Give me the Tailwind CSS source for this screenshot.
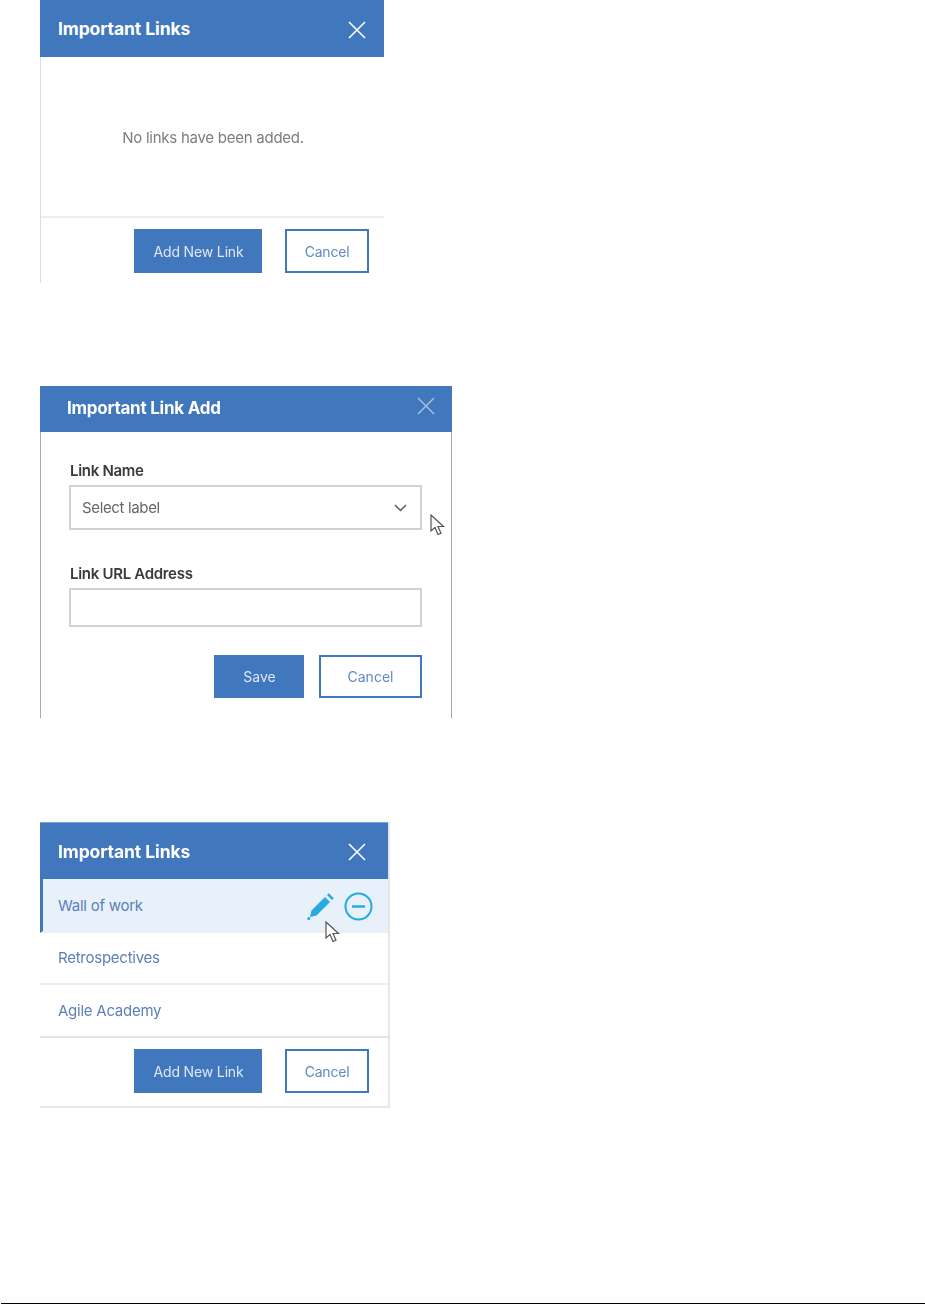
<!DOCTYPE html>
<html lang="en">
<head>
    <meta charset="UTF-8">
    <meta name="viewport" content="width=device-width, initial-scale=1.0">
    <title>Important Links</title>
    <script src="https://cdn.jsdelivr.net/npm/@tailwindcss/browser@4"></script>
</head>
<body class="bg-white font-['Inter',sans-serif] h-[1304px] overflow-hidden relative">
    <div class="pl-10 blur-[0.55px]">
        <!-- empty list -->
        <div class="w-[344px] h-[283px] border-l border-[#cfe0f2] flex flex-col">
            <div class="h-[57px] -ml-px bg-[#4077bd] flex items-center justify-between pl-[18px] pr-[17px]">
                <span class="text-[17.5px] font-bold text-white tracking-[-0.1px] pt-0.5">Important Links</span>
                <svg class="w-[20px] h-[20px] mt-0.5" viewBox="0 0 20 20" fill="none" stroke="#fff" stroke-width="1.6"><path d="M2 2l16 16M18 2L2 18"/></svg>
            </div>
            <div class="h-[161px] flex items-center justify-center border-b-2 border-[#eeeeee]">
                <span class="text-[15px] text-[#7d7d7d] tracking-[-0.25px] pt-1 pl-px">No links have been added.</span>
            </div>
            <div class="flex justify-end gap-[23px] pt-[11px] pr-[15px]">
                <button class="w-[128px] h-[44px] bg-[#4077bd] text-[#dfe8f4] text-[14px] tracking-[-0.15px] pl-px">Add New Link</button>
                <button class="w-[84px] h-[44px] border-2 border-[#4077bd] text-[#5f8ac4] text-[14px] tracking-[-0.2px]">Cancel</button>
            </div>
        </div>

        <!-- add form -->
        <div class="mt-[103px] w-[412px] h-[332px] border-x border-[#a9a9a9] flex flex-col">
            <div class="h-[46px] -mx-px bg-[#4077bd] flex items-center justify-between pl-[27px] pr-[17px]">
                <span class="text-[17px] font-bold text-white tracking-[-0.25px]">Important Link Add</span>
                <svg class="w-[18px] h-[18px] -mt-1.5" viewBox="0 0 18 18" fill="none" stroke="#a9c3e4" stroke-width="1.4"><path d="M1 1l16 16M17 1L1 17"/></svg>
            </div>
            <div class="pl-[28px] pr-[29px] pt-[29px]">
                <label class="block text-[15px] leading-[18px] font-semibold text-[#3a3a3a] tracking-[-0.3px] pl-px pt-px">Link Name</label>
                <div class="mt-[5px] h-[45px] border-2 border-[#cfd3d2] flex items-center justify-between pl-[11px] pr-[13px]">
                    <span class="text-[15px] text-[#666666] tracking-[-0.35px] pt-px">Select label</span>
                    <svg class="w-[13px] h-[8px]" viewBox="0 0 13 8" fill="none" stroke="#5a5a5a" stroke-width="1.5"><path d="M1 1l5.500 5.500L12 1"/></svg>
                </div>
                <label class="block mt-[35px] text-[15px] leading-[18px] font-semibold text-[#3a3a3a] tracking-[-0.3px] pl-px">Link URL Address</label>
                <div class="mt-[5px] h-[39px] border-2 border-[#cfd3d2]"></div>
                <div class="flex justify-end gap-[15px] mt-[28px]">
                    <button class="w-[90px] h-[43px] bg-[#4077bd] text-[#dfe8f4] text-[14px] pl-px">Save</button>
                    <button class="w-[103px] h-[43px] border-2 border-[#4077bd] text-[#5f8ac4] text-[14px]">Cancel</button>
                </div>
            </div>
        </div>

        <!-- filled list -->
        <div class="mt-[104px] w-[350px] h-[286px] border-r-2 border-b-2 border-[#e4e8ea] flex flex-col">
            <div class="h-[57px] bg-[#4077bd] border-t border-[#6fa3dc] flex items-center justify-between pl-[18px] pr-[21px]">
                <span class="text-[17.5px] font-bold text-white tracking-[-0.1px] pt-0.5">Important Links</span>
                <svg class="w-[20px] h-[20px] mt-0.5" viewBox="0 0 20 20" fill="none" stroke="#fff" stroke-width="1.6"><path d="M2 2l16 16M18 2L2 18"/></svg>
            </div>
            <div class="h-[54px] bg-[#e8f1fa] border-l-[3px] border-[#4077bd] border-b-2 border-b-[#eeeeee] flex items-center justify-between pl-[14px] pr-[15px]">
                <span class="text-[15px] text-[#5b7fb8] tracking-[-0.25px] pt-0.5 pl-px">Wall of work</span>
                <div class="flex items-center gap-[9px] pt-0.5">
                    <svg class="w-[28px] h-[28px]" viewBox="0 0 28 28" fill="#27a9e1"><path d="M4.500 18.500L18 5l5 5L9.500 23.500l-6.500 1.500z"/><path d="M20 3l1.800-1.800 5 5L25 8z"/><circle cx="1.800" cy="26.500" r="1.500"/></svg>
                    <svg class="w-[29px] h-[29px]" viewBox="0 0 29 29" fill="none" stroke="#27a9e1"><circle cx="14.500" cy="14.500" r="13" stroke-width="2"/><path d="M8 14.500h13" stroke-width="2.500"/></svg>
                </div>
            </div>
            <div class="h-[52px] border-b-2 border-[#eeeeee] flex items-center pl-[18px]">
                <span class="text-[15px] text-[#5b7fb8] tracking-[-0.25px]">Retrospectives</span>
            </div>
            <div class="h-[53px] border-b-2 border-[#e4e4e4] flex items-center pl-[18px]">
                <span class="text-[15px] text-[#5b7fb8] tracking-[-0.25px] pt-0.5">Agile Academy</span>
            </div>
            <div class="flex justify-end gap-[23px] pt-[11px] pr-[19px]">
                <button class="w-[128px] h-[44px] bg-[#4077bd] text-[#dfe8f4] text-[14px] tracking-[-0.15px] pl-px">Add New Link</button>
                <button class="w-[84px] h-[44px] border-2 border-[#4077bd] text-[#5f8ac4] text-[14px] tracking-[-0.2px]">Cancel</button>
            </div>
        </div>
    </div>

    <!-- mouse cursors -->
    <svg class="absolute left-[430px] top-[514px] w-[15px] h-[23px] blur-[0.3px]" viewBox="0 0 15 23" fill="#fff" stroke="#555" stroke-width="1.200"><path d="M1 1v16l4-3.500 3 7 3-1.300-3-6.700h5.500z"/></svg>
    <svg class="absolute left-[325px] top-[921px] w-[15px] h-[23px] blur-[0.3px]" viewBox="0 0 15 23" fill="#fff" stroke="#555" stroke-width="1.200"><path d="M1 1v16l4-3.500 3 7 3-1.300-3-6.700h5.500z"/></svg>

    <div class="absolute left-px right-0 bottom-0 h-px bg-black"></div>
</body>
</html>
